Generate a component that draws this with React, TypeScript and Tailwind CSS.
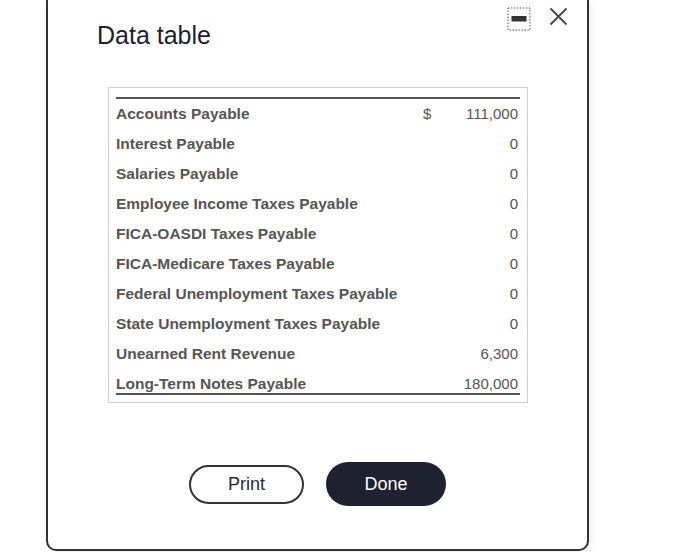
import React from "react"

const rows: { label: string; dollar?: boolean; amount: string }[] = [
  { label: "Accounts Payable", dollar: true, amount: "111,000" },
  { label: "Interest Payable", amount: "0" },
  { label: "Salaries Payable", amount: "0" },
  { label: "Employee Income Taxes Payable", amount: "0" },
  { label: "FICA-OASDI Taxes Payable", amount: "0" },
  { label: "FICA-Medicare Taxes Payable", amount: "0" },
  { label: "Federal Unemployment Taxes Payable", amount: "0" },
  { label: "State Unemployment Taxes Payable", amount: "0" },
  { label: "Unearned Rent Revenue", amount: "6,300" },
  { label: "Long-Term Notes Payable", amount: "180,000" },
]

export default function App() {
  return (
    <div className="w-[700px] h-[552px] bg-white overflow-hidden font-['Liberation_Sans',Arial,sans-serif]">
      <div className="ml-[46px] w-[543px] h-[551px] border-x-2 border-b-2 border-[#333] rounded-b-[10px] relative shadow-[2px_2px_6px_rgba(0,0,0,0.08)]">
        {/* window controls */}
        <div className="absolute top-[7px] right-[19px] flex items-start gap-[18px]">
          <svg width="24" height="24" viewBox="0 0 24 24">
            <rect x="1" y="1" width="22" height="22" fill="none" stroke="#555" strokeWidth="1" strokeDasharray="1.5 1.5" />
            <rect x="4.5" y="9" width="15" height="5.5" fill="#333" />
          </svg>
          <svg width="19" height="19" viewBox="0 0 19 19">
            <path d="M1.5 1.5 L17.5 17.5 M17.5 1.5 L1.5 17.5" stroke="#4a4a4a" strokeWidth="2" />
          </svg>
        </div>

        <h2 className="pl-[49px] pt-[21px] text-[25px] leading-[28px] text-[#1b1f2e]">Data table</h2>

        <div className="ml-[60px] mt-[38px] w-[420px] border border-[#cfcfcf] px-[7px] pt-[9px] pb-[7px]">
          <div className="border-t-2 border-[#555]" />
          {rows.map((r, i) => {
            const last = i === rows.length - 1
            return (
              <div
                key={r.label}
                className={
                  last
                    ? "flex items-center h-[26px] pt-[4px] border-b-2 border-[#555] text-[#555]"
                    : "flex items-center h-[30px] pb-[2px] text-[#555]"
                }
              >
                <span className="flex-1 text-[15.5px] font-bold leading-[17px] whitespace-nowrap">{r.label}</span>
                <span className="w-[20px] text-[15px] leading-[17px]">{r.dollar ? "$" : ""}</span>
                <span className="w-[77px] pr-[2px] text-right text-[15px] leading-[17px]">{r.amount}</span>
              </div>
            )
          })}
        </div>

        <div className="mt-[59px] flex justify-center items-center gap-[22px]">
          <button className="w-[115px] h-[39px] rounded-full border-2 border-[#333] bg-white text-[18px] text-[#2a2a2a]">
            Print
          </button>
          <button className="w-[120px] h-[44px] rounded-full bg-[#1e2130] text-[18px] text-white">
            Done
          </button>
        </div>
      </div>
    </div>
  )
}
